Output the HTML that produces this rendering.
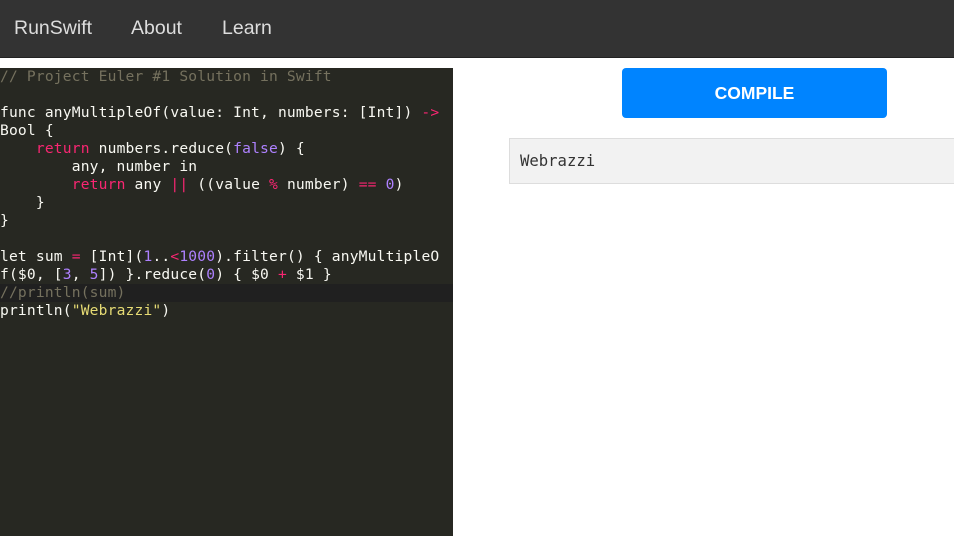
<!DOCTYPE html>
<html><head><style>
*{margin:0;padding:0;box-sizing:border-box}
body{width:954px;height:536px;overflow:hidden;background:#fff;font-family:"Liberation Sans",sans-serif;position:relative}
.nav{position:absolute;left:0;top:0;width:954px;height:58px;background:#333;border-bottom:1px solid #222}
.nav span{position:absolute;top:17px;font-size:19.5px;color:#ddd}
.ed{position:absolute;left:0;top:68px;width:453px;height:468px;background:#272822;font-family:"DejaVu Sans Mono",monospace;font-size:14.6px;letter-spacing:0.18px;color:#f8f8f2}
.l{height:18px;line-height:18px;white-space:pre;position:relative}
.c{color:#75715e}.k{color:#f92672}.n{color:#ae81ff}.s{color:#e6db74}
.act{background:#202020}
.btn{position:absolute;left:622px;top:68px;width:265px;height:50px;background:#0084ff;border-radius:4px;color:#fff;font-weight:bold;font-size:17.5px;text-align:center;line-height:50px}
.out{position:absolute;left:509px;top:138px;width:450px;height:46px;background:#f2f2f2;border:1px solid #ddd;font-family:"DejaVu Sans Mono",monospace;font-size:15.6px;color:#333;padding-left:10px;line-height:44px}
</style></head><body>
<div class="nav"><span style="left:14px">RunSwift</span><span style="left:131px">About</span><span style="left:222px">Learn</span></div>
<div class="ed">
<div class="l c">// Project Euler #1 Solution in Swift</div>
<div class="l"> </div>
<div class="l">func anyMultipleOf(value: Int, numbers: [Int]) <span class="k">-&gt;</span></div>
<div class="l">Bool {</div>
<div class="l">    <span class="k">return</span> numbers.reduce(<span class="n">false</span>) {</div>
<div class="l">        any, number in</div>
<div class="l">        <span class="k">return</span> any <span class="k">||</span> ((value <span class="k">%</span> number) <span class="k">==</span> <span class="n">0</span>)</div>
<div class="l">    }</div>
<div class="l">}</div>
<div class="l"> </div>
<div class="l">let sum <span class="k">=</span> [Int](<span class="n">1</span>..<span class="k">&lt;</span><span class="n">1000</span>).filter() { anyMultipleO</div>
<div class="l">f($0, [<span class="n">3</span>, <span class="n">5</span>]) }.reduce(<span class="n">0</span>) { $0 <span class="k">+</span> $1 }</div>
<div class="l act c">//println(sum)</div>
<div class="l">println(<span class="s">"Webrazzi"</span>)</div>
</div>
<div class="btn">COMPILE</div>
<div class="out">Webrazzi</div>
</body></html>
